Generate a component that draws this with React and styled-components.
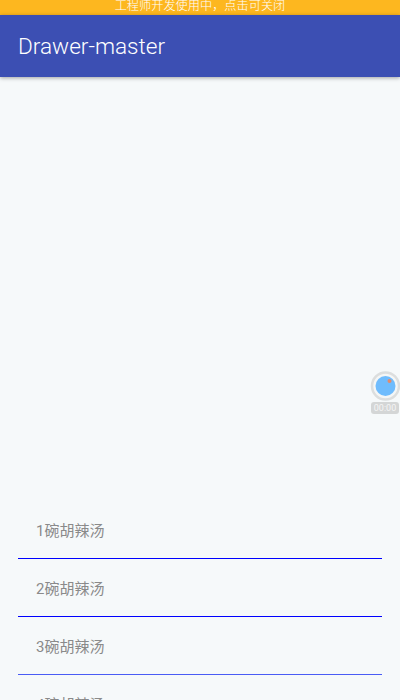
import styled, { createGlobalStyle } from "styled-components";

const Global = createGlobalStyle`
  html, body {
    margin: 0;
    padding: 0;
    height: 100%;
    overflow: hidden;
    background: #f6f9fa;
  }
`;

const Screen = styled.div`
  position: relative;
  width: 400px;
  height: 700px;
  overflow: hidden;
  display: flex;
  flex-direction: column;
  background: #f6f9fa;
  font-family: Roboto, "Noto Sans CJK SC", sans-serif;
`;
const DevBar = styled.div`
  height: 15px;
  flex: none;
  background: #fdb71f;
  color: #fff;
  font-size: 12.2px;
  font-weight: 300;
  line-height: 12px;
  text-align: center;
  overflow: hidden;
`;
const AppBar = styled.div`
  height: 62px;
  flex: none;
  display: flex;
  align-items: center;
  padding-left: 18px;
  background: #3c4fb3;
  color: #fff;
  font-size: 22.6px;
  font-weight: 300;
  box-shadow: 0 1px 4px rgba(0, 0, 0, 0.35);
  z-index: 1;
`;
const Content = styled.div`
  flex: 1;
  display: flex;
  flex-direction: column;
  padding: 424px 18px 0;
`;
const Row = styled.div`
  height: 58px;
  flex: none;
  box-sizing: border-box;
  display: flex;
  align-items: center;
  padding-left: 18px;
  border-bottom: 1px solid ${(p) => p.$line || "#0000ff"};
  color: #8a8a8a;
  font-size: 15px;
`;
const Floater = styled.div`
  position: absolute;
  right: 0;
  top: 371px;
  width: 30px;
  display: flex;
  flex-direction: column;
  align-items: center;
  gap: 1px;
`;
const Timer = styled.div`
  width: 28px;
  height: 12px;
  border-radius: 3px;
  background: #d4d6d6;
  color: #f5f5f5;
  font-size: 9px;
  line-height: 12px;
  text-align: center;
`;

const items = [
  { label: "1碗胡辣汤" },
  { label: "2碗胡辣汤" },
  { label: "3碗胡辣汤", line: "#4a5cf5" },
  { label: "4碗胡辣汤" },
];

export default function App() {
  return (
    <Screen>
      <Global />
      <DevBar>工程师开发使用中，点击可关闭</DevBar>
      <AppBar>Drawer-master</AppBar>
      <Content>
        {items.map((item) => (
          <Row key={item.label} $line={item.line}>
            {item.label}
          </Row>
        ))}
      </Content>
      <Floater>
        <svg width="30" height="30" viewBox="0 0 30 30">
          <circle cx="15.5" cy="15" r="13.5" fill="#f4f6f6" stroke="#dcdede" strokeWidth="2.5" />
          <circle cx="15.5" cy="15" r="10" fill="#6fbcfd" />
          <circle cx="19.5" cy="10" r="2" fill="#e58a6a" />
        </svg>
        <Timer>00:00</Timer>
      </Floater>
    </Screen>
  );
}
